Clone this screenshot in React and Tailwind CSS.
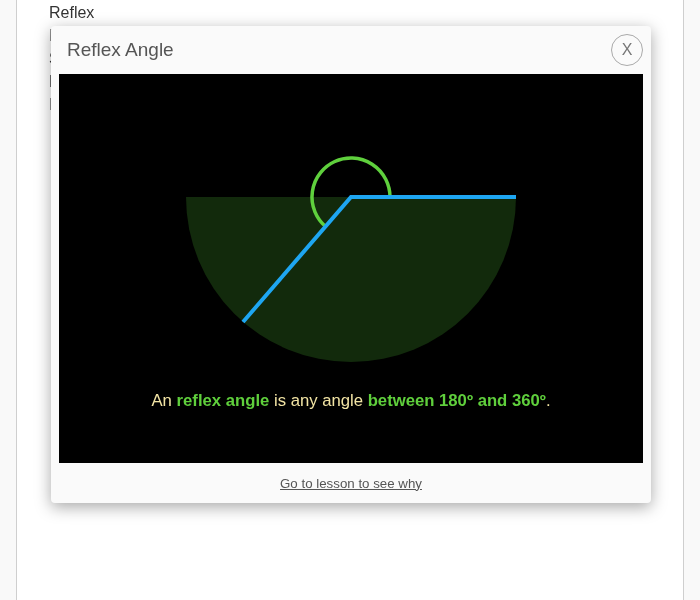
import React from "react";

const lines = ["Reflex", "Interior angle", "Straight angle", "Lines", "Interior"];

function ReflexDiagram() {
  // center of the angle, in svg coords
  const cx = 292;
  const cy = 123;
  return (
    <svg width="584" height="316" viewBox="0 0 584 316" className="block">
      <path d={`M ${cx - 165} ${cy} A 165 165 0 0 0 ${cx + 165} ${cy} Z`} fill="#122a0c" />
      <path
        d={`M ${cx + 39} ${cy} A 39 39 0 1 0 266.5 152.5`}
        fill="none"
        stroke="#5fd03d"
        strokeWidth="3.5"
      />
      <polyline
        points={`184,248 ${cx},${cy} ${cx + 165},${cy}`}
        fill="none"
        stroke="#1ea6f2"
        strokeWidth="4"
      />
    </svg>
  );
}

export default function App() {
  return (
    <div className="relative min-h-[600px] bg-[#f9f9f9] font-['Liberation_Sans',Arial,sans-serif]">
      <div className="ml-[16px] w-[668px] h-[600px] bg-white border-x border-[#cfcfcf] pl-[32px] pt-[1px] antialiased">
        {lines.map((l, i) => (
          <div key={i} className="text-[16px] leading-[23px] text-[#333] transform-gpu">
            {l}
          </div>
        ))}
      </div>

      {/* Modal */}
      <div className="absolute left-[51px] top-[26px] w-[600px] bg-[#fafafa] rounded-[4px] shadow-[0_4px_16px_rgba(0,0,0,0.35)]">
        <div className="h-[48px] flex items-center justify-between pl-[16px] pr-[8px]">
          <h2 className="text-[19px] text-[#555]">Reflex Angle</h2>
          <button className="w-[32px] h-[32px] rounded-full border border-[#aaa] flex items-center justify-center text-[16px] text-[#777] cursor-pointer">
            X
          </button>
        </div>
        <div className="mx-[8px] h-[389px] bg-black">
          <ReflexDiagram />
          <p className="text-center text-[16.7px] leading-[22px] text-[#f2e4a4]">
            An <b className="text-[#5fcf3c]">reflex angle</b> is any angle{" "}
            <b className="text-[#5fcf3c]">between 180º and 360º</b>.
          </p>
        </div>
        <div className="h-[40px] flex items-center justify-center pt-[1px]">
          <a href="#" className="text-[13.3px] text-[#555] underline">
            Go to lesson to see why
          </a>
        </div>
      </div>
    </div>
  );
}
